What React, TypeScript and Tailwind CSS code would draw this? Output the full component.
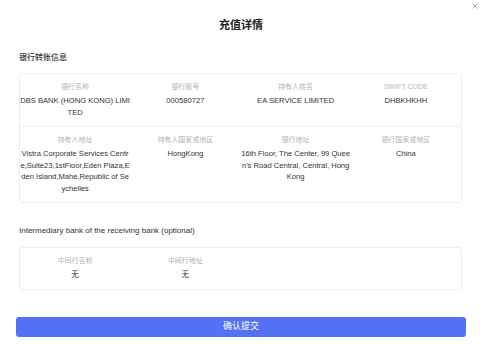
import React from "react";

const font = { fontFamily: '"Liberation Sans", "Noto Sans CJK SC", sans-serif' };

function Cell({ label, value }: { label: string; value: string }) {
  return (
    <div className="flex flex-col items-center text-center">
      <div className="text-[7px] leading-[9px] text-[#b4b4b4]">{label}</div>
      <div className="mt-[4px] text-[7.6px] leading-[11.5px] text-[#333] break-all w-full">{value}</div>
    </div>
  );
}

export default function App() {
  return (
    <div className="relative w-[482px] h-[344px] bg-white overflow-hidden" style={font}>
      <svg className="absolute left-[472px] top-[3px]" width="6" height="6" viewBox="0 0 6 6">
        <path d="M0.5 0.5 L5.5 5.5 M5.5 0.5 L0.5 5.5" stroke="#9a9a9a" strokeWidth="0.8" />
      </svg>
      <div className="pt-[17px] text-center text-[11px] leading-[16px] font-semibold text-[#222]">充值详情</div>
      <div className="pl-[19px] pr-[20px]">
        <div className="mt-[19px] text-[8px] leading-[12px] font-medium text-[#333]">银行转账信息</div>
        <div className="mt-[9px] border border-[#eeeeee] rounded-[3px]">
          <div className="grid grid-cols-4 py-[8px]">
            <Cell label="银行名称" value="DBS BANK (HONG KONG) LIMITED" />
            <Cell label="银行账号" value="000580727" />
            <Cell label="持有人姓名" value="EA SERVICE LIMITED" />
            <Cell label="SWIFT CODE" value="DHBKHKHH" />
          </div>
          <div className="border-t border-[#eeeeee] grid grid-cols-4 py-[8px]">
            <Cell label="持有人地址" value="Vistra Corporate Services Centre,Suite23,1stFloor,Eden Plaza,Eden Island,Mahé,Republic of Seychelles" />
            <Cell label="持有人国家或地区" value="HongKong" />
            <Cell label="银行地址" value="16th Floor, The Center, 99 Queen's Road Central, Central, Hong Kong" />
            <Cell label="银行国家或地区" value="China" />
          </div>
        </div>
        <div className="mt-[22px] text-[8px] leading-[12px] text-[#333]">Intermediary bank of the receiving bank (optional)</div>
        <div className="mt-[10px] border border-[#eeeeee] rounded-[3px]">
          <div className="grid grid-cols-4 py-[8px]">
            <Cell label="中间行名称" value="无" />
            <Cell label="中间行地址" value="无" />
          </div>
        </div>
      </div>
      <div className="px-[16px] mt-[27px]">
        <div className="h-[20px] rounded-[3px] bg-[#5272f3] flex items-center justify-center text-white text-[9px]">确认提交</div>
      </div>
    </div>
  );
}
